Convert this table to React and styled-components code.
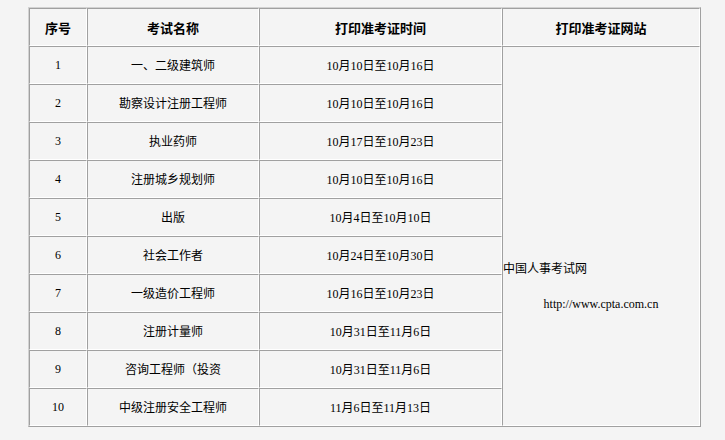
import React from "react";
import styled, { createGlobalStyle } from "styled-components";

const rows = [
  ["1", "一、二级建筑师", "10月10日至10月16日"],
  ["2", "勘察设计注册工程师", "10月10日至10月16日"],
  ["3", "执业药师", "10月17日至10月23日"],
  ["4", "注册城乡规划师", "10月10日至10月16日"],
  ["5", "出版", "10月4日至10月10日"],
  ["6", "社会工作者", "10月24日至10月30日"],
  ["7", "一级造价工程师", "10月16日至10月23日"],
  ["8", "注册计量师", "10月31日至11月6日"],
  ["9", "咨询工程师（投资", "10月31日至11月6日"],
  ["10", "中级注册安全工程师", "11月6日至11月13日"],
];

const GlobalStyle = createGlobalStyle`
  html, body {
    margin: 0;
    padding: 0;
    background: #f4f4f4;
  }
  body {
    font-family: "Liberation Serif", "Noto Sans CJK SC", serif;
    font-size: 12px;
    color: #000;
  }
`;

const Page = styled.div`
  padding: 7px 0 0 28px;
`;

const Table = styled.table`
  width: 673px;
  border-collapse: separate;
  border-spacing: 0;
  border-style: solid;
  border-width: 1px;
  border-color: #d2d2d2 #a0a0a0 #a0a0a0 #d2d2d2;
  table-layout: fixed;
`;

const Th = styled.th`
  height: 36px;
  padding: 0;
  font-size: 13px;
  font-weight: bold;
  text-align: center;
  vertical-align: middle;
  border-style: solid;
  border-width: 1px;
  border-color: #a0a0a0 #ffffff #ffffff #a0a0a0;
`;

const Td = styled.td`
  height: 36px;
  padding: 0;
  text-align: center;
  vertical-align: middle;
  border-style: solid;
  border-width: 1px;
  border-color: #a0a0a0 #ffffff #ffffff #a0a0a0;
`;

const SiteCell = styled(Td)`
  text-align: left;
  padding-top: 100px;
`;

const SiteName = styled.div`
  line-height: 16px;
`;

const SiteUrl = styled.p`
  margin: 19px 0 0;
  text-align: center;
  line-height: 16px;
`;

export default function App() {
  return (
    <>
      <GlobalStyle />
      <Page>
        <Table>
          <colgroup>
            <col style={{ width: 58 }} />
            <col style={{ width: 172 }} />
            <col style={{ width: 243 }} />
            <col />
          </colgroup>
          <thead>
            <tr>
              <Th>序号</Th>
              <Th>考试名称</Th>
              <Th>打印准考证时间</Th>
              <Th>打印准考证网站</Th>
            </tr>
          </thead>
          <tbody>
            {rows.map(([no, name, time], i) => (
              <tr key={no}>
                <Td>{no}</Td>
                <Td>{name}</Td>
                <Td>{time}</Td>
                {i === 0 && (
                  <SiteCell rowSpan={rows.length}>
                    <SiteName>中国人事考试网</SiteName>
                    <SiteUrl>http://www.cpta.com.cn</SiteUrl>
                  </SiteCell>
                )}
              </tr>
            ))}
          </tbody>
        </Table>
      </Page>
    </>
  );
}
